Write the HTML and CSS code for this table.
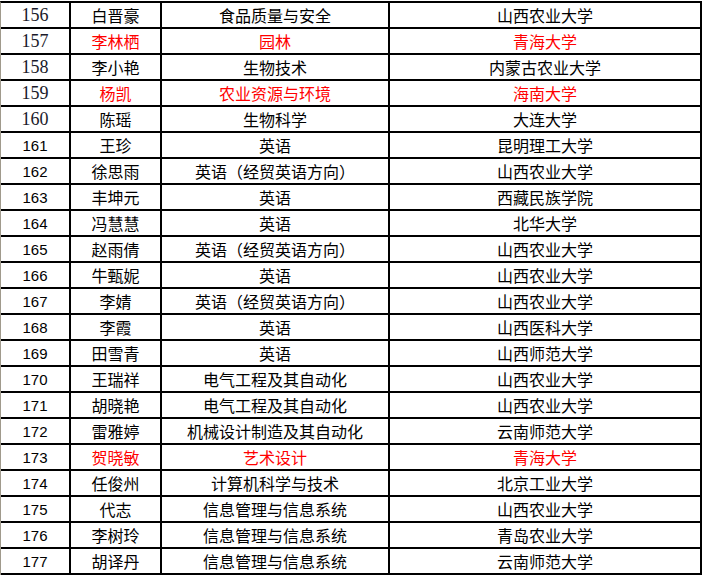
FILE: index.html
```html
<!DOCTYPE html>
<html lang="zh-CN">
<head>
<meta charset="utf-8">
<link rel="stylesheet" href="styles.css">
</head>
<body>
<div class="sheet">
  <div class="row"><div class="c n serif">156</div><div class="c">白晋豪</div><div class="c">食品质量与安全</div><div class="c">山西农业大学</div></div>
  <div class="row red"><div class="c n serif">157</div><div class="c">李林栖</div><div class="c">园林</div><div class="c">青海大学</div></div>
  <div class="row"><div class="c n serif">158</div><div class="c">李小艳</div><div class="c">生物技术</div><div class="c">内蒙古农业大学</div></div>
  <div class="row red"><div class="c n serif">159</div><div class="c">杨凯</div><div class="c">农业资源与环境</div><div class="c">海南大学</div></div>
  <div class="row"><div class="c n serif">160</div><div class="c">陈瑶</div><div class="c">生物科学</div><div class="c">大连大学</div></div>
  <div class="row"><div class="c n">161</div><div class="c">王珍</div><div class="c">英语</div><div class="c">昆明理工大学</div></div>
  <div class="row"><div class="c n">162</div><div class="c">徐思雨</div><div class="c">英语（经贸英语方向）</div><div class="c">山西农业大学</div></div>
  <div class="row"><div class="c n">163</div><div class="c">丰坤元</div><div class="c">英语</div><div class="c">西藏民族学院</div></div>
  <div class="row"><div class="c n">164</div><div class="c">冯慧慧</div><div class="c">英语</div><div class="c">北华大学</div></div>
  <div class="row"><div class="c n">165</div><div class="c">赵雨倩</div><div class="c">英语（经贸英语方向）</div><div class="c">山西农业大学</div></div>
  <div class="row"><div class="c n">166</div><div class="c">牛甄妮</div><div class="c">英语</div><div class="c">山西农业大学</div></div>
  <div class="row"><div class="c n">167</div><div class="c">李婧</div><div class="c">英语（经贸英语方向）</div><div class="c">山西农业大学</div></div>
  <div class="row"><div class="c n">168</div><div class="c">李霞</div><div class="c">英语</div><div class="c">山西医科大学</div></div>
  <div class="row"><div class="c n">169</div><div class="c">田雪青</div><div class="c">英语</div><div class="c">山西师范大学</div></div>
  <div class="row"><div class="c n">170</div><div class="c">王瑞祥</div><div class="c">电气工程及其自动化</div><div class="c">山西农业大学</div></div>
  <div class="row"><div class="c n">171</div><div class="c">胡晓艳</div><div class="c">电气工程及其自动化</div><div class="c">山西农业大学</div></div>
  <div class="row"><div class="c n">172</div><div class="c">雷雅婷</div><div class="c">机械设计制造及其自动化</div><div class="c">云南师范大学</div></div>
  <div class="row red"><div class="c n">173</div><div class="c">贺晓敏</div><div class="c">艺术设计</div><div class="c">青海大学</div></div>
  <div class="row"><div class="c n">174</div><div class="c">任俊州</div><div class="c">计算机科学与技术</div><div class="c">北京工业大学</div></div>
  <div class="row"><div class="c n">175</div><div class="c">代志</div><div class="c">信息管理与信息系统</div><div class="c">山西农业大学</div></div>
  <div class="row"><div class="c n">176</div><div class="c">李树玲</div><div class="c">信息管理与信息系统</div><div class="c">青岛农业大学</div></div>
  <div class="row"><div class="c n">177</div><div class="c">胡译丹</div><div class="c">信息管理与信息系统</div><div class="c">云南师范大学</div></div>
</div>
</body>
</html>
```

FILE: styles.css
```css
html, body {
  margin: 0;
  padding: 0;
  background: #ffffff;
}
.sheet {
  width: 701px;
  margin-top: 1px;
  border-top: 2px solid #000;
  border-left: 1px solid #a09a8c;
  font-family: "Noto Sans CJK SC", "DejaVu Sans", sans-serif;
  font-size: 16px;
  color: #000;
}
.row {
  display: grid;
  grid-template-columns: 70px 91px 228px 312px;
  height: 26px;
}
.row.red {
  color: #ff0000;
}
.c {
  box-sizing: border-box;
  height: 26px;
  border-right: 2px solid #000;
  border-bottom: 2px solid #000;
  display: flex;
  align-items: center;
  justify-content: center;
  line-height: 1;
  white-space: nowrap;
}
.n {
  font-family: "Liberation Sans", sans-serif;
  font-size: 15px;
  color: #000;
}
.n.serif {
  font-family: "Liberation Serif", serif;
  font-size: 18px;
  color: #1a1a2a;
}
```
